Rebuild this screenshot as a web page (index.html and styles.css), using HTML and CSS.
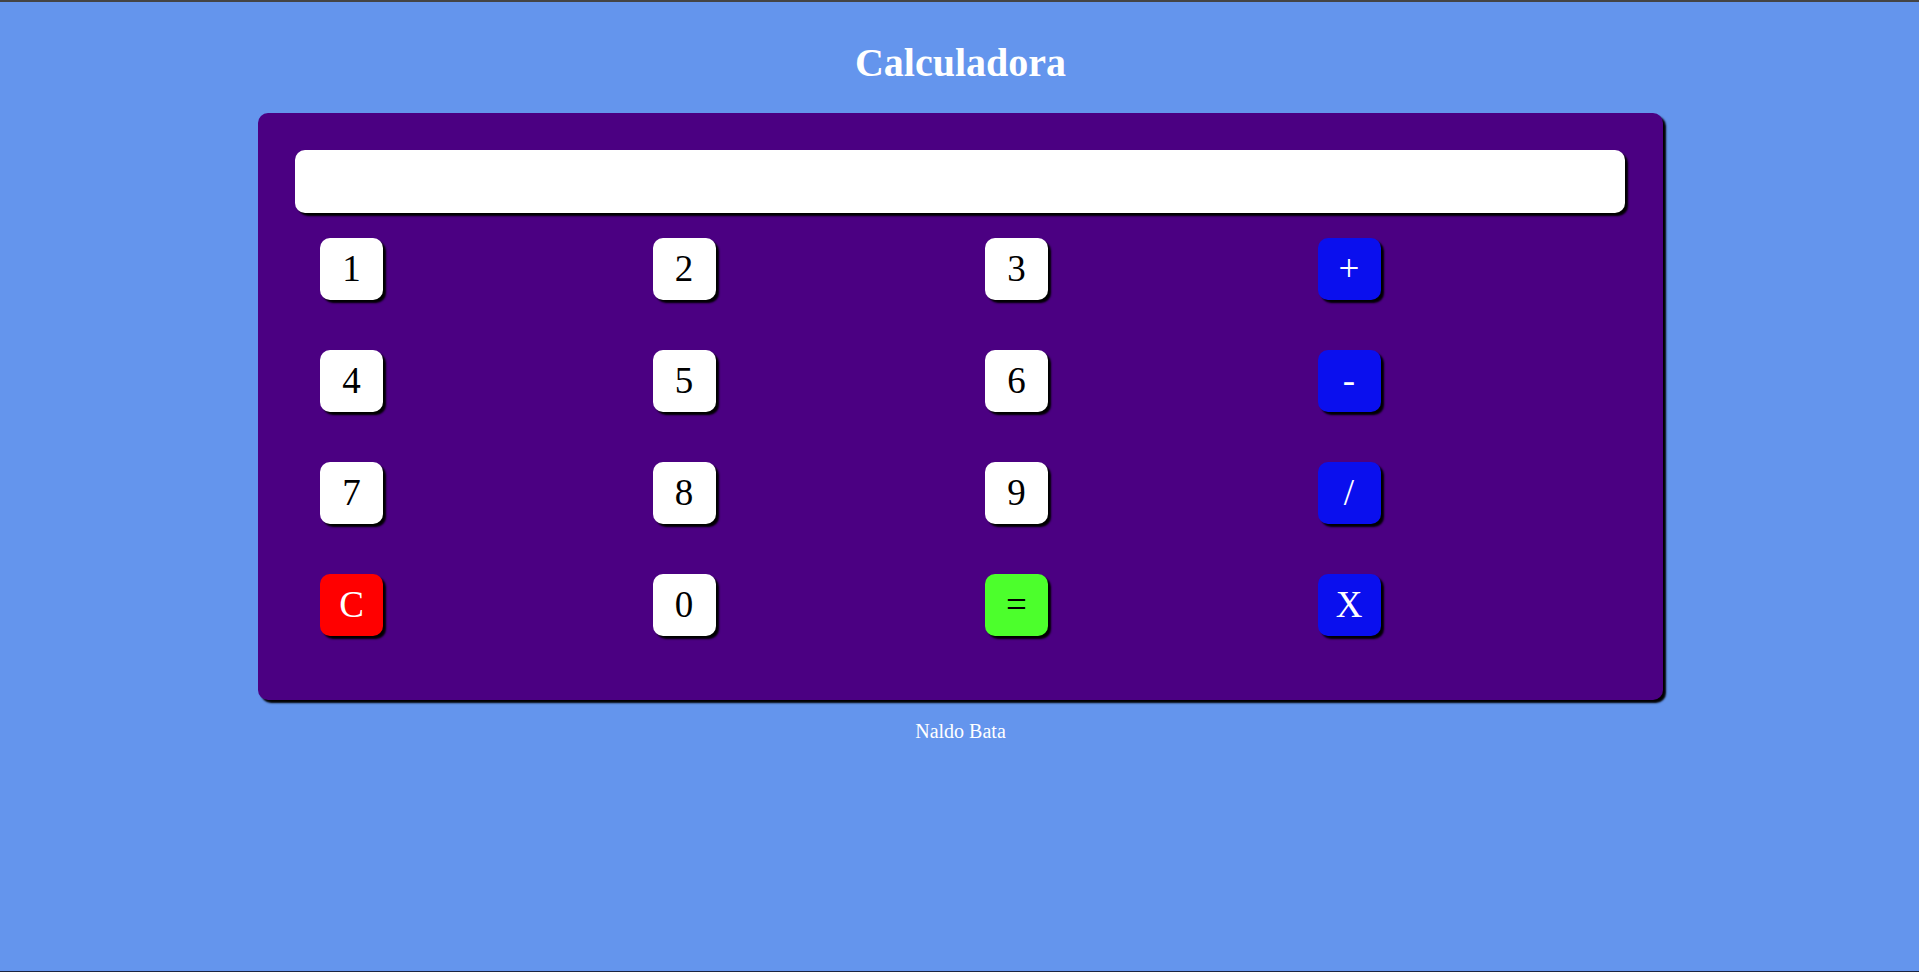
FILE: index.html
```html
<!DOCTYPE html>
<html lang="pt">
<head>
<meta charset="utf-8">
<title>Calculadora</title>
<link rel="stylesheet" href="styles.css">
</head>
<body>
<h1 class="title">Calculadora</h1>
<div class="calc">
  <div class="display"></div>
  <div class="keys">
    <button class="key">1</button>
    <button class="key">2</button>
    <button class="key">3</button>
    <button class="key op">+</button>
    <button class="key">4</button>
    <button class="key">5</button>
    <button class="key">6</button>
    <button class="key op">-</button>
    <button class="key">7</button>
    <button class="key">8</button>
    <button class="key">9</button>
    <button class="key op">/</button>
    <button class="key clear">C</button>
    <button class="key">0</button>
    <button class="key equal">=</button>
    <button class="key op">X</button>
  </div>
</div>
<p class="footer">Naldo Bata</p>
</body>
</html>
```
FILE: styles.css
```css
html, body {
  margin: 0;
  padding: 0;
}
body {
  background: #6495ED;
  font-family: "Liberation Serif", "Times New Roman", serif;
  border-top: 2px solid #444444;
  border-bottom: 1px solid #1b2540;
  padding-left: 2px;
  min-height: 100vh;
  box-sizing: border-box;
  overflow: hidden;
}
.title {
  margin: 38px 0 27px;
  font-size: 40px;
  line-height: 46px;
  font-weight: bold;
  color: #ffffff;
  text-align: center;
}
.calc {
  width: 1405px;
  box-sizing: border-box;
  margin: 0 auto;
  padding: 37px 38px 39px 37px;
  background: #4B0082;
  border-radius: 10px;
  box-shadow: 3px 3px 2px #000;
}
.display {
  height: 63px;
  background: #fff;
  border-radius: 10px;
  box-shadow: 3px 3px 2px #000;
}
.keys {
  display: grid;
  grid-template-columns: repeat(4, 1fr);
}
.key {
  justify-self: start;
  margin: 25px;
  width: 63px;
  height: 62px;
  padding: 0;
  border: none;
  border-radius: 10px;
  background: #fff;
  color: #000;
  font-family: "Liberation Serif", "Times New Roman", serif;
  font-size: 37px;
  line-height: 62px;
  box-shadow: 3px 3px 2px #000;
  display: flex;
  align-items: center;
  justify-content: center;
}
.op {
  background: #0a0fee;
  color: #fff;
}
.clear {
  background: #ff0000;
  color: #fff;
}
.equal {
  background: #4cff2c;
  color: #000;
}
.footer {
  margin: 20px 0 0;
  font-size: 20px;
  line-height: 23px;
  color: #fff;
  text-align: center;
}
```
